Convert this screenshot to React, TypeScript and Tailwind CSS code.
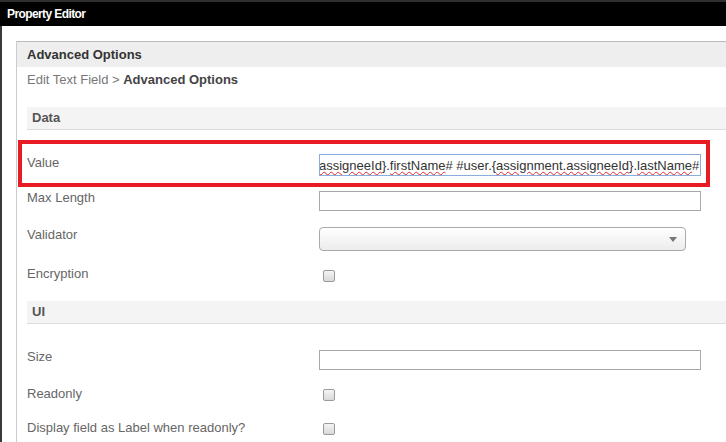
import React from 'react';

const labelCls = "w-[292px] shrink-0 text-[13px] leading-[16px] text-[#666]";

function Checkbox() {
  return (
    <div className="ml-[4px] w-[12px] h-[12px] rounded-[2px] border border-[#9a9a9a] bg-linear-to-b from-[#f4f4f4] to-[#d9d9d9]" />
  );
}

function TextBox() {
  return <div className="w-[382px] h-[20px] border border-[#a9a9a9] bg-white" />;
}

function Section({ title, className }: { title: string; className?: string }) {
  return (
    <div className={`h-[23px] bg-[#f4f4f4] border-b border-[#dddddd] pl-[5px] flex items-center text-[13px] font-bold text-[#555] ${className ?? ''}`}>
      {title}
    </div>
  );
}

const Wavy = ({ children }: { children: React.ReactNode }) => (
  <span className="underline decoration-wavy decoration-[#e0292b] decoration-1 underline-offset-[1px]">{children}</span>
);

export default function App() {
  return (
    <div className="relative w-[726px] h-[442px] overflow-hidden bg-white font-['Liberation_Sans',Arial,sans-serif]">
      {/* Title bar */}
      <div className="h-[26px] bg-black border-t-2 border-[#2f2f2f] flex items-center pl-[7px] text-white font-bold text-[12px] tracking-[-0.6px]">
        Property Editor
      </div>

      <div className="flex h-[416px] border-l-2 border-[#3a3a3a] pt-[15px] pl-[14px]">
        <div className="flex-1 border-l border-[#cccccc]">
          {/* Header */}
          <div className="h-[26px] border-t border-[#bbbbbb] bg-[#eeeeee] pl-[10px] flex items-center text-[13px] font-bold text-[#333]">
            Advanced Options
          </div>
          <div className="h-[25px] pl-[10px] flex items-center text-[13px] text-[#777]">
            Edit Text Field &gt;&nbsp;<span className="font-bold text-[#444]">Advanced Options</span>
          </div>

          <div className="pl-[10px]">
            <Section title="Data" className="mt-[15px]" />

            {/* Value */}
            <div className="flex items-start mt-[24px]">
              <div className={`${labelCls} mt-[1px]`}>Value</div>
              <div className="w-[382px] h-[22px] border border-[#8badde] bg-white overflow-hidden pl-[1px] pr-[3px] pt-[3px] whitespace-nowrap text-[13px] leading-[15px] text-[#333]">
                <div className="flex items-start -ml-[2px]">
                  <span>
                    <Wavy>assigneeId</Wavy>{'}'}.<Wavy>firstName</Wavy># #user.{'{'}<Wavy>assignment.assigneeId</Wavy>{'}'}.<Wavy>lastName</Wavy>#
                  </span>
                  <span className="w-[1px] h-[15px] bg-black" />
                </div>
              </div>
            </div>

            {/* Max Length */}
            <div className="flex items-start mt-[15px]">
              <div className={`${labelCls} -mt-[1px]`}>Max Length</div>
              <TextBox />
            </div>

            {/* Validator */}
            <div className="flex items-start mt-[16px]">
              <div className={labelCls}>Validator</div>
              <div className="relative w-[367px] h-[24px] rounded-[4px] border border-[#aaaaaa] bg-linear-to-b from-white to-[#ececec]">
                <svg className="absolute right-[8px] top-[9px]" width="8" height="5" viewBox="0 0 8 5">
                  <path d="M0 0 L8 0 L4 5 Z" fill="#777" />
                </svg>
              </div>
            </div>

            {/* Encryption */}
            <div className="flex items-start mt-[15px]">
              <div className={labelCls}>Encryption</div>
              <div className="mt-[4px]"><Checkbox /></div>
            </div>

            <Section title="UI" className="mt-[19px]" />

            {/* Size */}
            <div className="flex items-start mt-[25px]">
              <div className={labelCls}>Size</div>
              <div className="mt-[1px]"><TextBox /></div>
            </div>

            {/* Readonly */}
            <div className="flex items-start mt-[16px]">
              <div className={labelCls}>Readonly</div>
              <div className="mt-[3px]"><Checkbox /></div>
            </div>

            {/* Display as label */}
            <div className="flex items-start mt-[18px]">
              <div className={labelCls}>Display field as Label when readonly?</div>
              <div className="mt-[3px]"><Checkbox /></div>
            </div>
          </div>
        </div>
      </div>

      {/* Red annotation box */}
      <div className="absolute left-[18px] top-[140px] w-[692px] h-[47px] border-4 border-[#e81c24] pointer-events-none" />
    </div>
  );
}
